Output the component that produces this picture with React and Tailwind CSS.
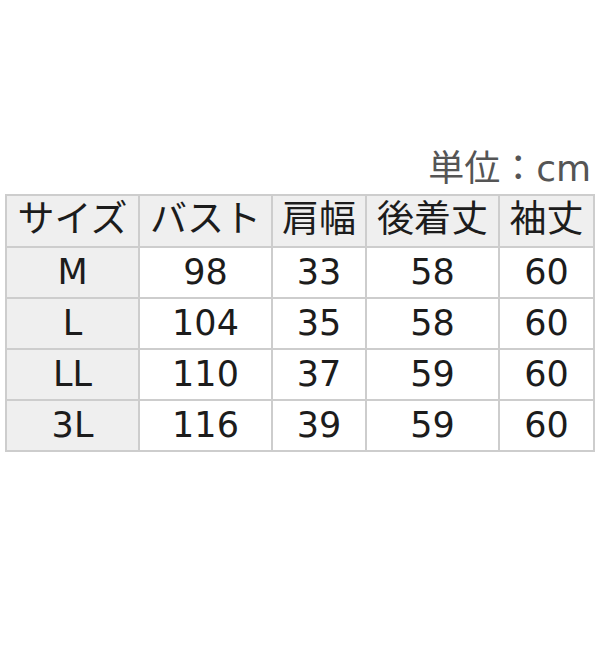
export default function App() {
  const rows = [
    ["M", "98", "33", "58", "60"],
    ["L", "104", "35", "58", "60"],
    ["LL", "110", "37", "59", "60"],
    ["3L", "116", "39", "59", "60"],
  ];
  const heads = ["サイズ", "バスト", "肩幅", "後着丈", "袖丈"];
  const widths = ["w-[133px]", "w-[133px]", "w-[94px]", "w-[133px]", "w-[95px]"];
  return (
    <div className="w-[600px] h-[660px] bg-white font-['DejaVu_Sans','Noto_Sans_CJK_JP',sans-serif] text-[#1c1c1c]">
      <div className="pt-[146px] pr-[9px] text-right text-[36px] leading-[46px] text-[#555]">単位：cm</div>
      <table className="ml-[5px] mt-[2px] border-collapse table-fixed">
        <thead>
          <tr className="h-[52px]">
            {heads.map((h, i) => (
              <th
                key={i}
                className={`${widths[i]} border-2 border-[#cdcdcd] bg-[#efefef] p-0 pb-[4px] text-[37px] font-normal leading-none`}
              >
                {h}
              </th>
            ))}
          </tr>
        </thead>
        <tbody>
          {rows.map((r, ri) => (
            <tr key={ri} className="h-[51px]">
              {r.map((c, ci) => (
                <td
                  key={ci}
                  className={`border-2 border-[#cdcdcd] p-0 text-center text-[35px] leading-none ${ci === 0 ? "bg-[#efefef]" : "bg-white"}`}
                >
                  {c}
                </td>
              ))}
            </tr>
          ))}
        </tbody>
      </table>
    </div>
  );
}
